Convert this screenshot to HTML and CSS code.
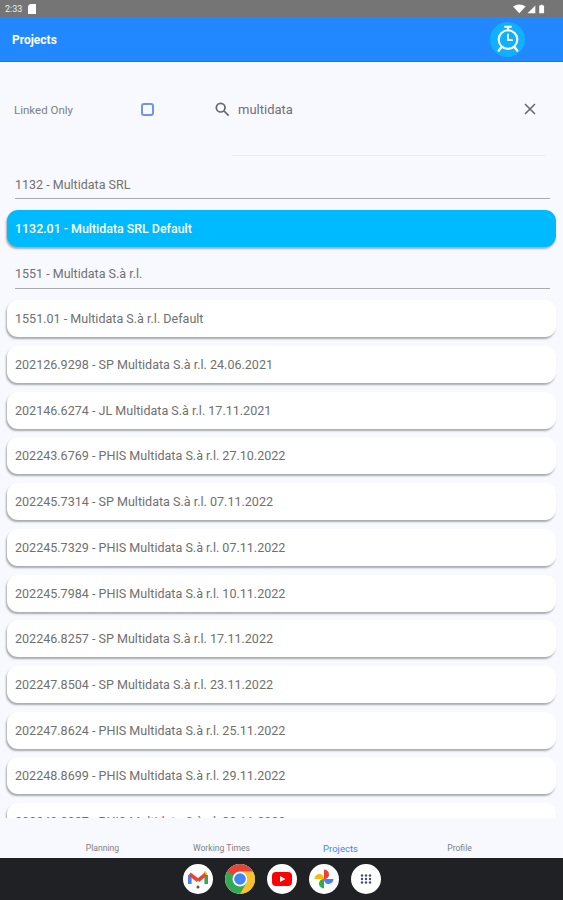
FILE: index.html
```html
<!DOCTYPE html>
<html lang="en">
<head>
    <meta charset="UTF-8">
    <meta name="viewport" content="width=device-width, initial-scale=1.0">
    <title>Projects</title>
    <link rel="stylesheet" href="styles.css">
</head>
<body>
    <!-- Status bar -->
    <div class="status-bar">
        <div class="status-left">
            <span>2:33</span>
            <svg class="status-sd" viewBox="0 0 8 10"><path d="M2 0h6v10H0V2z" fill="#fff"/></svg>
        </div>
        <svg class="status-icons" viewBox="0 0 34 10">
            <path d="M0 2.500C4-.5 9-.5 13 2.500L6.500 9.500z" fill="#fff"/>
            <path d="M15 9.500L23 1.500v8z" fill="#fff"/>
            <path d="M27 1.500h1.500V.5h2v1H32v8h-5z" fill="#fff"/>
        </svg>
    </div>

    <!-- App bar -->
    <header class="app-bar">
        <h1 class="app-title">Projects</h1>
        <div class="timer-btn">
            <svg viewBox="0 0 24 24" width="28" height="28" fill="none" stroke="#fff" stroke-linecap="round">
                <circle cx="12" cy="12.500" r="8" stroke-width="1.800"/>
                <path d="M12 8v5h3.500" stroke-width="1.500"/>
                <path d="M9.500 1.500h5M12 1.500v3" stroke-width="1.800"/>
                <path d="M6 19.500l-2 2.500M18 19.500l2 2.500" stroke-width="2"/>
            </svg>
        </div>
    </header>

    <main class="content">
        <!-- Filter row -->
        <div class="filters">
            <span class="linked-label">Linked Only</span>
            <span class="checkbox"></span>
            <div class="search">
                <svg class="search-icon" viewBox="0 0 24 24" width="16" height="16" fill="none" stroke="#666" stroke-width="2.600">
                    <circle cx="10" cy="10" r="6.500"/>
                    <path d="M15 15l7 7"/>
                </svg>
                <span class="search-text">multidata</span>
                <svg class="clear-icon" viewBox="0 0 12 12" width="12" height="12" fill="none" stroke="#666" stroke-width="1.500">
                    <path d="M1 1l10 10M11 1L1 11"/>
                </svg>
            </div>
        </div>

        <!-- Project list -->
        <div class="list">
            <div class="group-title">1132 - Multidata SRL</div>
            <div class="card selected">1132.01 - Multidata SRL Default</div>
            <div class="group-title second">1551 - Multidata S.à r.l.</div>
            <div class="card">1551.01 - Multidata S.à r.l. Default</div>
            <div class="card">202126.9298 - SP Multidata S.à r.l. 24.06.2021</div>
            <div class="card">202146.6274 - JL Multidata S.à r.l. 17.11.2021</div>
            <div class="card">202243.6769 - PHIS Multidata S.à r.l. 27.10.2022</div>
            <div class="card">202245.7314 - SP Multidata S.à r.l. 07.11.2022</div>
            <div class="card">202245.7329 - PHIS Multidata S.à r.l. 07.11.2022</div>
            <div class="card">202245.7984 - PHIS Multidata S.à r.l. 10.11.2022</div>
            <div class="card">202246.8257 - SP Multidata S.à r.l. 17.11.2022</div>
            <div class="card">202247.8504 - SP Multidata S.à r.l. 23.11.2022</div>
            <div class="card">202247.8624 - PHIS Multidata S.à r.l. 25.11.2022</div>
            <div class="card">202248.8699 - PHIS Multidata S.à r.l. 29.11.2022</div>
            <div class="card">202249.8987 - PHIS Multidata S.à r.l. 30.11.2022</div>
        </div>
    </main>

    <!-- Bottom navigation -->
    <nav class="bottom-nav">
        <span class="nav-item">Planning</span>
        <span class="nav-item">Working Times</span>
        <span class="nav-item active">Projects</span>
        <span class="nav-item">Profile</span>
    </nav>

    <!-- Android dock -->
    <footer class="dock">
        <div class="dock-icon">
            <svg viewBox="0 0 30 30" width="30" height="30" fill="none" stroke-width="3.600">
                <path d="M6.800 11v9" stroke="#4285f4"/>
                <path d="M23.200 11v9" stroke="#34a853"/>
                <path d="M6.500 10l8.500 6.500" stroke="#ea4335"/>
                <path d="M15 16.500L23 10" stroke="#ea4335"/>
                <path d="M22 9.500l1.500-1" stroke="#fbbc04"/>
                <circle cx="15" cy="23" r="1.500" fill="#555" stroke="none"/>
            </svg>
        </div>
        <div class="dock-icon">
            <svg viewBox="0 0 30 30" width="30" height="30">
                <circle cx="15" cy="15" r="15" fill="#34a853"/>
                <path d="M15 0A15 15 0 0 1 28 7.500H15A7.500 7.500 0 0 0 8.500 11.200L2 7.500A15 15 0 0 1 15 0z" fill="#ea4335"/>
                <path d="M28 7.500A15 15 0 0 1 15 30L21.500 18.700A7.500 7.500 0 0 0 15 7.500z" fill="#fbc02d"/>
                <circle cx="15" cy="15" r="7.500" fill="#fff"/>
                <circle cx="15" cy="15" r="5.800" fill="#4285f4"/>
            </svg>
        </div>
        <div class="dock-icon">
            <svg viewBox="0 0 24 24" width="24" height="24">
                <rect x="2" y="5" width="20" height="14" rx="4" fill="#f00"/>
                <path d="M10 9l5.500 3-5.500 3z" fill="#fff"/>
            </svg>
        </div>
        <div class="dock-icon">
            <svg viewBox="0 0 24 24" width="24" height="24">
                <path d="M12 12H2.500a5 5 0 0 1 5-5c2.500 0 4.500 2 4.500 5z" fill="#fbbc04"/>
                <path d="M12 12V2.500a5 5 0 0 1 5 5c0 2.500-2 4.500-5 4.500z" fill="#ea4335"/>
                <path d="M12 12h9.500a5 5 0 0 1-5 5c-2.500 0-4.500-2-4.500-5z" fill="#4285f4"/>
                <path d="M12 12v9.500a5 5 0 0 1-5-5c0-2.500 2-4.500 5-4.500z" fill="#34a853"/>
            </svg>
        </div>
        <div class="dock-icon">
            <svg viewBox="0 0 12 10" width="12" height="10" fill="#414b7a">
                <circle cx="2" cy="1.500" r="1.200"/>
                <circle cx="6" cy="1.500" r="1.200"/>
                <circle cx="10" cy="1.500" r="1.200"/>
                <circle cx="2" cy="5" r="1.200"/>
                <circle cx="6" cy="5" r="1.200"/>
                <circle cx="10" cy="5" r="1.200"/>
                <circle cx="2" cy="8.500" r="1.200"/>
                <circle cx="6" cy="8.500" r="1.200"/>
                <circle cx="10" cy="8.500" r="1.200"/>
            </svg>
        </div>
    </footer>
</body>
</html>
```

FILE: styles.css
```css
* {
    box-sizing: border-box;
}

body {
    font-family: 'Roboto', Arial, sans-serif;
    margin: 0;
    height: 900px;
    display: flex;
    flex-direction: column;
    overflow: hidden;
    background-color: #f8f9ff;
    color: #707070;
}

.status-bar {
    height: 17px;
    flex: none;
    display: flex;
    justify-content: space-between;
    align-items: center;
    padding: 0 17px 0 5px;
    background-color: #757575;
    color: #eee;
    font-size: 9px;
}

.status-left {
    display: flex;
    align-items: center;
    gap: 6px;
}

.status-sd {
    width: 8px;
    height: 10px;
}

.status-icons {
    width: 33px;
    height: 10px;
}

.app-bar {
    height: 45px;
    flex: none;
    display: flex;
    justify-content: space-between;
    align-items: center;
    padding: 2px 38px 0 12px;
    background-color: #2188ff;
    border-bottom: 1px solid #0a7cf5;
}

.app-title {
    margin: 0;
    font-size: 12px;
    font-weight: 700;
    color: #fff;
}

.timer-btn {
    width: 35px;
    height: 35px;
    margin-top: -2px;
    display: flex;
    justify-content: center;
    align-items: center;
    border-radius: 50%;
    background-color: #10b0ff;
}

.content {
    flex: 1;
    min-height: 0;
    overflow: hidden;
}

.filters {
    height: 94px;
    display: flex;
    padding: 36px 27px 0 14px;
    align-items: flex-start;
    position: relative;
}

.linked-label {
    width: 127px;
    line-height: 24px;
    font-size: 11.500px;
    color: #808080;
}

.checkbox {
    width: 13px;
    height: 13px;
    margin-top: 5px;
    border: 2px solid #6f95e8;
    border-radius: 3px;
}

.search {
    flex: 1;
    display: flex;
    align-items: center;
    height: 22px;
    margin-left: 60px;
    font-size: 13px;
}

.search-text {
    flex: 1;
    margin-left: 8px;
    padding-top: 1px;
}

.search::after {
    content: '';
    position: absolute;
    left: 232px;
    right: 18px;
    bottom: 0;
    border-bottom: 1px solid #ececf2;
}

.list {
    display: flex;
    flex-direction: column;
    padding: 0 7px;
}

.group-title {
    height: 43px;
    margin: 0 6px 11px 8px;
    padding-top: 22px;
    line-height: 14px;
    font-size: 12.500px;
    border-bottom: 1px solid #aaa;
}

.group-title.second {
    height: 42px;
    margin-bottom: 11.400px;
    padding-top: 20px;
}

.card {
    height: 37px;
    flex: none;
    margin-bottom: 8.700px;
    padding-left: 8px;
    display: flex;
    align-items: center;
    font-size: 12.550px;
    background-color: #fff;
    border-radius: 11px;
    box-shadow: -1px 2px 2px rgba(0, 0, 0, 0.32);
}

.card.selected {
    margin-bottom: 0;
    color: #fff;
    font-size: 12.400px;
    font-weight: 500;
    background-color: #00baff;
}

.bottom-nav {
    height: 40px;
    flex: none;
    display: grid;
    grid-template-columns: repeat(4, 119px);
    justify-content: center;
    padding: 25px 1px 0 0;
    line-height: 11px;
    font-size: 8.600px;
    text-align: center;
    color: #808080;
    background-color: #f8f9ff;
}

.nav-item.active {
    font-size: 9.500px;
    color: #3f86f5;
}

.dock {
    height: 42px;
    flex: none;
    display: flex;
    justify-content: center;
    align-items: center;
    gap: 12px;
    background-color: #202124;
}

.dock-icon {
    width: 30px;
    height: 30px;
    display: flex;
    justify-content: center;
    align-items: center;
    border-radius: 50%;
    background-color: #fff;
    overflow: hidden;
}
```
